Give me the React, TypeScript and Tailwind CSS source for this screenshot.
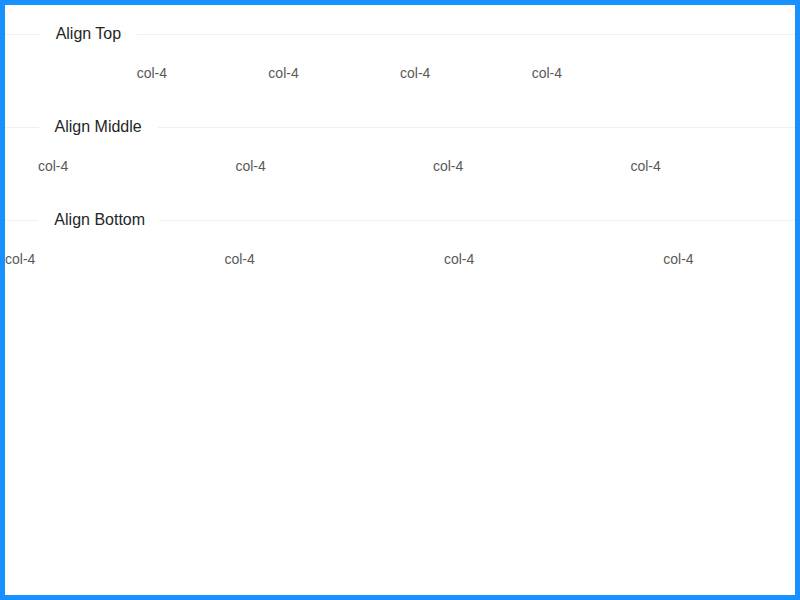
import React from 'react';

const sections = [
  { title: 'Align Top', justify: 'justify-center' },
  { title: 'Align Middle', justify: 'justify-around' },
  { title: 'Align Bottom', justify: 'justify-between' },
];

function Divider({ title }: { title: string }) {
  return (
    <div className="flex items-center h-6 mt-4 mb-4">
      <div className="w-[5%] border-t border-[#f0f0f0]" />
      <span className="px-4 text-base leading-6 text-[#262626] whitespace-nowrap">{title}</span>
      <div className="w-[95%] border-t border-[#f0f0f0]" />
    </div>
  );
}

export default function App() {
  return (
    <div
      className="flex flex-col w-[800px] h-[600px] border-[5px] border-[#1890ff] bg-white pt-px"
      style={{ fontFamily: '"Liberation Sans", Arial, sans-serif' }}
    >
      {sections.map((s) => (
        <div key={s.title} className="flex flex-col">
          <Divider title={s.title} />
          <div className={`flex ${s.justify} mb-[15px]`}>
            {[0, 1, 2, 3].map((i) => (
              <div key={i} className="w-1/6 text-sm leading-[22px] text-[#595959]">
                col-4
              </div>
            ))}
          </div>
        </div>
      ))}
    </div>
  );
}
